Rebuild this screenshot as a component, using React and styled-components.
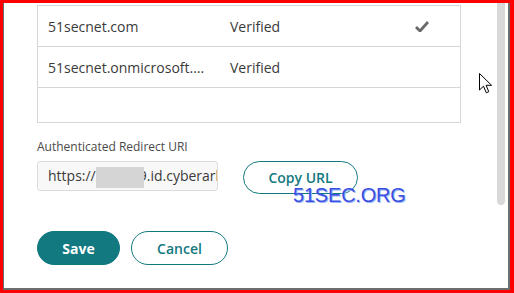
import React from "react";
import styled, { createGlobalStyle } from "styled-components";

const GlobalStyle = createGlobalStyle`
  html, body {
    margin: 0;
    padding: 0;
    background: #ffffff;
  }
  * {
    box-sizing: border-box;
  }
`;

const teal = "#137981";

const Frame = styled.div`
  width: 514px;
  height: 293px;
  border-style: solid;
  border-color: #ff0000;
  border-width: 3px 4px 3px 3px;
  font-family: "Open Sans", "Noto Sans", sans-serif;
  color: #3a3a3a;
`;

const Window = styled.div`
  position: relative;
  height: 100%;
  display: flex;
  border-style: solid;
  border-color: #6e6e6e;
  border-width: 0 2px 2px 1px;
  background: #ffffff;
  overflow: hidden;
`;

const Main = styled.div`
  flex: 1;
  padding: 2px 0 0 33px;
  display: flex;
  flex-direction: column;
`;

const Table = styled.div`
  width: 424px;
  border: 1px solid #d6d6d6;
  border-top: none;
`;

const Row = styled.div`
  display: grid;
  grid-template-columns: 182px 1fr 60px;
  align-items: center;
  height: ${({ $h }) => $h}px;
  border-top: 1px solid #d6d6d6;
  font-size: 14px;
`;

const Cell = styled.div`
  padding-left: 10px;
  white-space: nowrap;
  overflow: hidden;
`;

const CheckCell = styled.div`
  display: flex;
  justify-content: flex-end;
  padding-right: 31px;
  padding-top: 1px;
`;

const Label = styled.div`
  margin-top: 16px;
  font-size: 12px;
  line-height: 16px;
  color: #4a4a4a;
`;

const UriRow = styled.div`
  display: flex;
  align-items: flex-start;
  gap: 25px;
  margin-top: 6px;
`;

const UriBox = styled.div`
  flex-shrink: 0;
  width: 181px;
  height: 30px;
  border: 1px solid #dcdcdc;
  border-radius: 3px;
  background: #f8f8f8;
  padding-left: 10px;
  font-size: 14px;
  line-height: 28px;
  white-space: nowrap;
  overflow: hidden;
  color: #3a3a3a;
`;

const Redact = styled.span`
  display: inline-block;
  vertical-align: middle;
  width: 48px;
  height: 21px;
  margin-right: -5px;
  background: #d5d5d5;
  position: relative;
  z-index: 1;
`;

const Button = styled.button`
  flex-shrink: 0;
  height: ${({ $h }) => $h}px;
  width: ${({ $w }) => $w}px;
  border-radius: 17px;
  border: 1px solid ${teal};
  background: ${({ $primary }) => ($primary ? teal : "#ffffff")};
  color: ${({ $primary }) => ($primary ? "#ffffff" : teal)};
  font-family: "Open Sans", "Noto Sans", sans-serif;
  font-size: 14px;
  font-weight: ${({ $bold }) => ($bold ? 700 : 600)};
  padding: 0;
  cursor: pointer;
`;

const Actions = styled.div`
  display: flex;
  gap: 11px;
  margin-top: 37px;
`;

const ScrollTrack = styled.div`
  width: 11px;
  padding-right: 3px;
`;

const Thumb = styled.div`
  width: 8px;
  height: 202px;
  background: #d8d8d8;
  border-radius: 0 0 4px 4px;
`;

const Watermark = styled.div`
  position: absolute;
  left: 289px;
  top: 181px;
  font-family: "Liberation Sans", Arial, sans-serif;
  font-size: 20px;
  color: #3b4fe2;
  text-shadow: 1px 1px 0 #9ab8f2;
  letter-spacing: -0.2px;
  pointer-events: none;
`;

const Pointer = styled.svg`
  position: absolute;
  left: 475px;
  top: 70px;
`;

const Check = () => (
  <svg width="14" height="11" viewBox="0 0 14 11">
    <path d="M1 6 L5 10 L13 1" fill="none" stroke="#6a6a6a" strokeWidth="2.8" strokeLinejoin="round" />
  </svg>
);

export default function App() {
  return (
    <>
      <GlobalStyle />
      <Frame>
        <Window>
          <Main>
            <Table>
              <Row $h={41}>
                <Cell>51secnet.com</Cell>
                <Cell>Verified</Cell>
                <CheckCell>
                  <Check />
                </CheckCell>
              </Row>
              <Row $h={41}>
                <Cell>51secnet.onmicrosoft.…</Cell>
                <Cell>Verified</Cell>
                <div />
              </Row>
              <Row $h={35} />
            </Table>
            <Label>Authenticated Redirect URI</Label>
            <UriRow>
              <UriBox>
                https://<Redact />9.id.cyberark.cloud
              </UriBox>
              <Button $w={115} $h={33}>Copy URL</Button>
            </UriRow>
            <Actions>
              <Button $primary $bold $w={83} $h={34}>Save</Button>
              <Button $w={97} $h={34}>Cancel</Button>
            </Actions>
          </Main>
          <ScrollTrack>
            <Thumb />
          </ScrollTrack>
          <Watermark>51SEC.ORG</Watermark>
          <Pointer width="14" height="22" viewBox="0 0 14 22">
            <path d="M0.5 0.5 L0.5 17 L4.5 13.2 L7.3 19.8 L9.8 18.7 L7.1 12.3 L12.6 12.3 Z" fill="#ffffff" stroke="#000000" strokeWidth="1" strokeLinejoin="miter" />
          </Pointer>
        </Window>
      </Frame>
    </>
  );
}
